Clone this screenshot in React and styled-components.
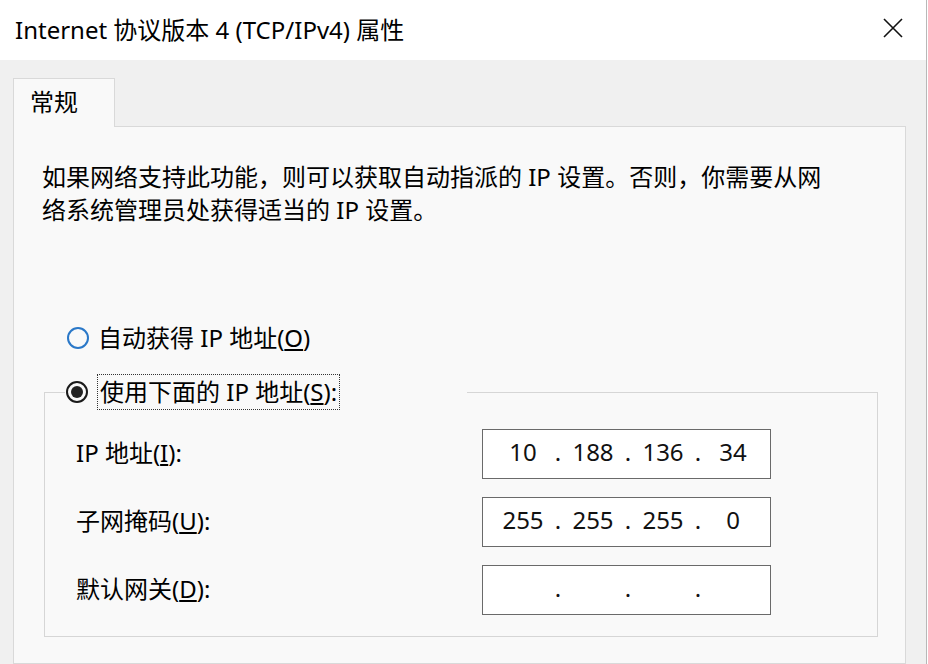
import React from 'react'
import styled, { createGlobalStyle } from 'styled-components'

const GlobalStyle = createGlobalStyle`
    html, body {
        margin: 0;
        padding: 0;
        background: #ffffff;
    }
    body {
        font-family: "Noto Sans", "Noto Sans CJK SC", sans-serif;
        color: #000;
    }
`;

const fields = [
    { label: '子网掩码', key: 'U', value: ['255', '255', '255', '0'] },
    { label: '默认网关', key: 'D', value: ['', '', '', ''] },
];

const IpBox = ({ parts }) => (
    <Input>
        {parts.map((p, i) => (
            <React.Fragment key={i}>
                {i > 0 && <Dot>.</Dot>}
                <Octet>{p}</Octet>
            </React.Fragment>
        ))}
    </Input>
)

const App = () => {
    return (
        <Window>
            <GlobalStyle />
            <TitleBar>
                <Title>Internet 协议版本 4 (TCP/IPv4) 属性</Title>
                <Close aria-label="关闭">
                    <svg width="20" height="20" viewBox="0 0 20 20">
                        <path d="M1 1 L19 19 M19 1 L1 19" stroke="#111" strokeWidth="1.6" fill="none" />
                    </svg>
                </Close>
            </TitleBar>
            <Body>
                <Tabs>
                    <Tab>常规</Tab>
                </Tabs>
                <Panel>
                    <Intro>
                        如果网络支持此功能，则可以获取自动指派的 IP 设置。否则，你需要从网络系统管理员处获得适当的 IP 设置。
                    </Intro>
                    <AutoRow>
                        <Radio />
                        <RadioText>自动获得 IP 地址(<u>O</u>)</RadioText>
                    </AutoRow>
                    <Group>
                        <Legend>
                            <Radio checked />
                            <FocusLabel>
                                <RadioText>使用下面的 IP 地址(<u>S</u>):</RadioText>
                            </FocusLabel>
                        </Legend>
                        <Grid>
                            <FieldLabel>IP 地址(<u>I</u>):</FieldLabel>
                            <IpBox parts={['10', '188', '136', '34']} />
                            {fields.map((f) => (
                                <React.Fragment key={f.key}>
                                    <FieldLabel>{f.label}(<u>{f.key}</u>):</FieldLabel>
                                    <IpBox parts={f.value} />
                                </React.Fragment>
                            ))}
                        </Grid>
                    </Group>
                </Panel>
            </Body>
        </Window>
    )
}

export default App


const Window = styled.div`
    width: 927px;
    height: 664px;
    box-sizing: border-box;
    border-right: 1px solid #b8b8b8;
    display: flex;
    flex-direction: column;
    overflow: hidden;
    background: #ffffff;
`;
const TitleBar = styled.div`
    height: 60px;
    flex: none;
    display: flex;
    align-items: center;
    justify-content: space-between;
    padding: 0 23px 0 15px;
    background: #ffffff;
`;
const Title = styled.div`
    font-size: 24px;
    margin-top: -3px;
`;
const Close = styled.div`
    width: 20px;
    height: 20px;
    display: flex;
    margin-top: -4px;
`;
const Body = styled.div`
    flex: 1;
    display: flex;
    flex-direction: column;
    background: #f0f0f0;
    padding: 18px 20px 0 13px;
`;
const Tabs = styled.div`
    display: flex;
`;
const Tab = styled.div`
    width: 102px;
    height: 49px;
    box-sizing: border-box;
    border: 1px solid #d9d9d9;
    border-bottom: none;
    background: #f9f9f9;
    padding: 8px 0 0 16px;
    font-size: 24px;
    line-height: 30px;
    margin-bottom: -1px;
    position: relative;
    z-index: 1;
`;
const Panel = styled.div`
    flex: 1;
    border: 1px solid #d9d9d9;
    background: #f9f9f9;
    padding-top: 33px;
`;
const Intro = styled.p`
    margin: 0 0 0 28px;
    width: 796px;
    font-size: 24px;
    line-height: 33px;
`;
const AutoRow = styled.div`
    margin: 94px 0 0 53px;
    height: 36px;
    display: flex;
    align-items: center;
    gap: 9px;
    font-size: 24px;
`;
const RadioText = styled.span`
    margin-top: -4px;
`;
const Radio = styled.span`
    width: 22px;
    height: 22px;
    box-sizing: border-box;
    border-radius: 50%;
    border: 2px solid ${(p) => (p.checked ? '#1a1a1a' : '#2a78c8')};
    display: flex;
    align-items: center;
    justify-content: center;
    flex: none;
    &::after {
        content: '';
        display: ${(p) => (p.checked ? 'block' : 'none')};
        width: 12px;
        height: 12px;
        border-radius: 50%;
        background: #222;
    }
`;
const Group = styled.fieldset`
    margin: 18px 27px 0 30px;
    padding: 19px 0 21px 0;
    border: 1px solid #d6d6d6;
    min-width: 0;
`;
const Legend = styled.legend`
    width: 402px;
    box-sizing: border-box;
    margin-left: 20px;
    padding: 0 0 0 1px;
    height: 36px;
    display: flex;
    align-items: center;
    gap: 9px;
    font-size: 24px;
`;
const FocusLabel = styled.span`
    height: 36px;
    box-sizing: border-box;
    display: flex;
    align-items: center;
    padding: 0 2px;
    border: 1px dotted #333;
`;
const Grid = styled.div`
    display: grid;
    grid-template-columns: 406px 289px;
    row-gap: 18px;
    align-items: center;
    padding-left: 31px;
`;
const FieldLabel = styled.div`
    font-size: 24px;
    margin-top: -5px;
`;
const Input = styled.div`
    height: 50px;
    box-sizing: border-box;
    border: 1px solid #6a6a6a;
    background: #ffffff;
    display: flex;
    align-items: center;
    padding: 0 0 5px 11px;
    font-size: 24px;
    color: #111;
`;
const Octet = styled.span`
    width: 58px;
    text-align: center;
`;
const Dot = styled.span`
    width: 12px;
    text-align: center;
`;
